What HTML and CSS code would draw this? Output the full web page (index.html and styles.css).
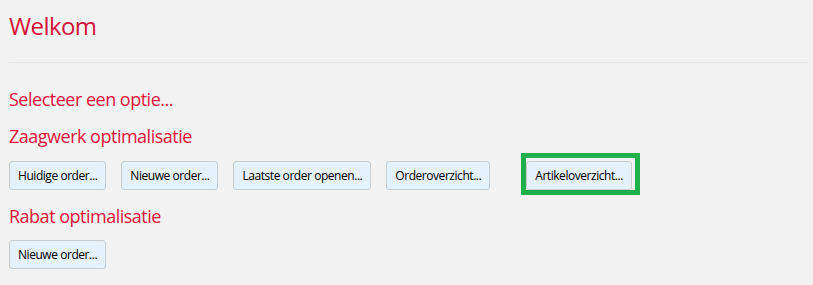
FILE: index.html
```html
<!DOCTYPE html>
<html lang="nl">
<head>
    <meta charset="UTF-8">
    <meta name="viewport" content="width=device-width, initial-scale=1.0">
    <title>Welkom</title>
    <link rel="stylesheet" href="styles.css">
</head>
<body>
    <div class="page">
        <h1 class="title">Welkom</h1>
        <hr class="divider">

        <h2 class="section-title">Selecteer een optie...</h2>

        <h2 class="section-title">Zaagwerk optimalisatie</h2>
        <div class="button-row">
            <button class="btn">Huidige order...</button>
            <button class="btn">Nieuwe order...</button>
            <button class="btn">Laatste order openen...</button>
            <button class="btn">Orderoverzicht...</button>
            <div class="highlight">
                <button class="btn">Artikeloverzicht...</button>
            </div>
        </div>

        <h2 class="section-title section-gap">Rabat optimalisatie</h2>
        <div class="button-row">
            <button class="btn">Nieuwe order...</button>
        </div>
    </div>
</body>
</html>
```

FILE: styles.css
```css
* {
    margin: 0;
    padding: 0;
    box-sizing: border-box;
}

body {
    font-family: 'Open Sans', 'Noto Sans', sans-serif;
    background: #f2f2f2;
    color: #000;
}

.page {
    padding: 0 5px 0 9px;
}

.title {
    margin-top: 11px;
    font-size: 24px;
    line-height: 30px;
    font-weight: 400;
    color: #d4143c;
    letter-spacing: -0.6px;
}

.divider {
    margin-top: 21px;
    border: none;
    border-top: 1px solid #e7e7e7;
}

.section-title {
    margin-top: 13px;
    font-size: 18px;
    line-height: 24px;
    font-weight: 400;
    color: #e0143c;
    letter-spacing: -0.5px;
}

.divider + .section-title {
    margin-top: 24px;
}

.section-gap {
    margin-top: 14px;
}

.button-row {
    display: flex;
    align-items: flex-start;
    gap: 15px;
    margin-top: 13px;
}

.section-gap + .button-row {
    margin-top: 12px;
}

.btn {
    height: 29px;
    padding: 0 8px;
    font-family: inherit;
    font-size: 12px;
    color: #000;
    background: #e5f1fb;
    border: 1px solid #c8cdd2;
    border-radius: 3px;
    letter-spacing: -0.45px;
    cursor: pointer;
}

.highlight {
    margin: -8px 0 -5px 16px;
    padding: 3px 3px 0 0;
    border: 5px solid #1fb04b;
}
```
